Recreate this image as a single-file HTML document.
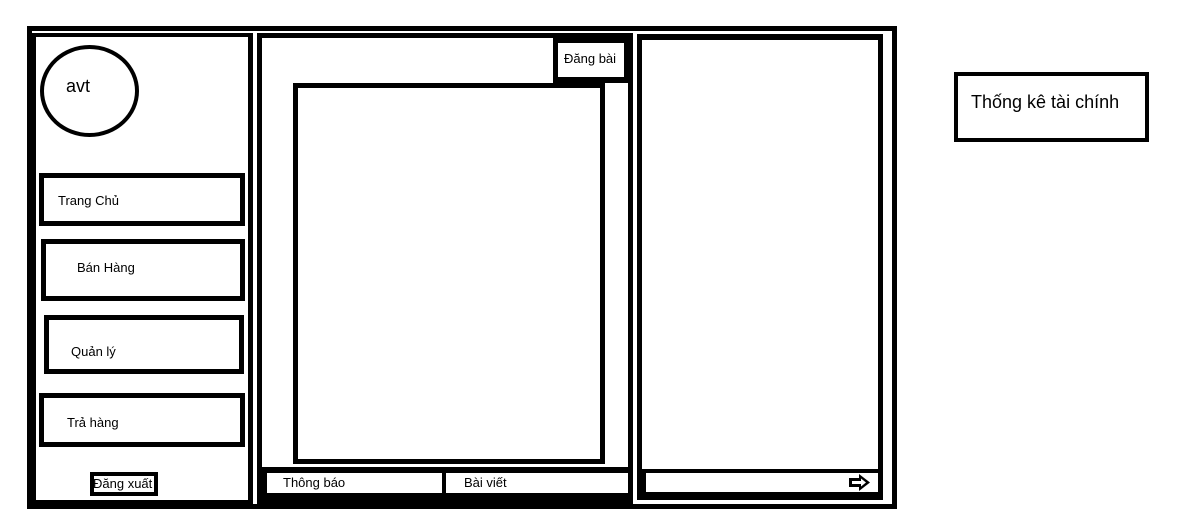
<!DOCTYPE html>
<html><head><meta charset="utf-8"><style>
body{margin:0;width:1203px;height:530px;background:#fff;position:relative;overflow:hidden;font-family:"Liberation Sans","DejaVu Sans",sans-serif;color:#000}
.b{position:absolute;box-sizing:border-box;border:solid #000}
.t{position:absolute;font-size:13px;white-space:nowrap}
</style></head><body>
<div class="b" style="left:27px;top:26px;width:870px;height:483px;border-width:5px 5px 5px 5px"></div>
<div class="b" style="left:27px;top:33px;width:226px;height:475px;border-width:4px 5px 8px 9px"></div>
<div class="b" style="left:40px;top:45px;width:99px;height:92px;border-width:4px;border-radius:50%"></div>
<div class="t" style="left:66px;top:76px;font-size:18px">avt</div>
<div class="b" style="left:39px;top:173px;width:206px;height:53px;border-width:5px"></div>
<div class="t" style="left:58px;top:193px">Trang Chủ</div>
<div class="b" style="left:41px;top:239px;width:204px;height:62px;border-width:5px"></div>
<div class="t" style="left:77px;top:260px">Bán Hàng</div>
<div class="b" style="left:44px;top:315px;width:200px;height:59px;border-width:5px"></div>
<div class="t" style="left:71px;top:344px">Quản lý</div>
<div class="b" style="left:39px;top:393px;width:206px;height:54px;border-width:5px"></div>
<div class="t" style="left:67px;top:415px">Trả hàng</div>
<div class="b" style="left:90px;top:472px;width:68px;height:24px;border-width:4px"></div>
<div class="t" style="left:93px;top:476px">Đăng xuất</div>
<div class="b" style="left:257px;top:33px;width:376px;height:475px;border-width:5px 5px 8px 5px"></div>
<div class="b" style="left:553px;top:33px;width:80px;height:50px;border-width:10px 9px 6px 5px"></div>
<div class="t" style="left:564px;top:51px">Đăng bài</div>
<div class="b" style="left:293px;top:83px;width:312px;height:381px;border-width:5px"></div>
<div class="b" style="left:257px;top:467px;width:376px;height:33px;border-width:6px 5px 7px 10px"></div>
<div class="b" style="left:442px;top:470px;width:4px;height:25px;background:#000;border:0"></div>
<div class="t" style="left:283px;top:475px">Thông báo</div>
<div class="t" style="left:464px;top:475px">Bài viết</div>
<div class="b" style="left:637px;top:34px;width:246px;height:466px;border-width:6px 5px 5px 5px"></div>
<div class="b" style="left:637px;top:469px;width:246px;height:30px;border-width:4px 5px 7px 9px"></div>
<svg style="position:absolute;left:848px;top:473px" width="24" height="19" viewBox="0 0 24 19"><path d="M1 5h10V1l11 8.5L11 18v-4H1z" fill="#000"/><path d="M4 8h9V5.5l5 4-5 4V11H4z" fill="#fff"/></svg>
<div class="b" style="left:954px;top:72px;width:195px;height:70px;border-width:4px"></div>
<div class="t" style="left:971px;top:92px;font-size:18px">Thống kê tài chính</div>
</body></html>
